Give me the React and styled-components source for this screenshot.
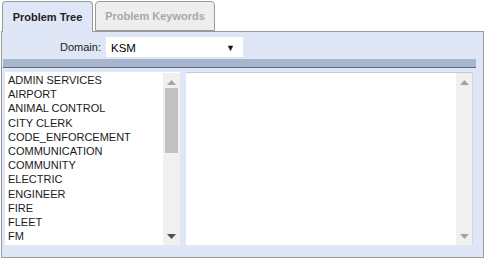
import React from "react";
import styled, { createGlobalStyle } from "styled-components";

const Global = createGlobalStyle`
  html, body { margin: 0; padding: 0; background: #fff; }
  body { font-family: "Liberation Sans", Arial, sans-serif; }
`;

const Root = styled.div`
  width: 483px;
  height: 258px;
  margin-left: 1px;
  display: flex;
  flex-direction: column;
`;

const TabBar = styled.div`
  display: flex;
  gap: 2px;
  padding-left: 1px;
  padding-top: 1px;
  height: 30px;
  position: relative;
  z-index: 1;
`;

const Tab = styled.div`
  box-sizing: border-box;
  width: ${(p) => p.$w}px;
  height: ${(p) => (p.$active ? 31 : 30)}px;
  border: 1px solid #9a9a9a;
  border-bottom: ${(p) => (p.$active ? "none" : "1px solid #9a9a9a")};
  border-radius: 4px 4px 0 0;
  background: ${(p) => (p.$active ? "#dfe6f5" : "#eeeeee")};
  color: ${(p) => (p.$active ? "#222" : "#a8a8a8")};
  font-size: 11px;
  font-weight: bold;
  display: flex;
  align-items: center;
  justify-content: center;
  padding-bottom: 1px;
`;

const Panel = styled.div`
  box-sizing: border-box;
  height: 227px;
  border: 1px solid #9a9a9a;
  background: #dfe6f5;
  display: flex;
  flex-direction: column;
`;

const DomainRow = styled.div`
  display: flex;
  align-items: center;
  gap: 5px;
  padding: 5px 0 0 58px;
  height: 20px;
`;

const Label = styled.span`
  font-size: 11px;
  color: #222;
`;

const Select = styled.div`
  box-sizing: border-box;
  width: 137px;
  height: 20px;
  background: #fff;
  display: flex;
  align-items: center;
  justify-content: space-between;
  padding: 1px 8px 0 5px;
  font-size: 11.5px;
  color: #000;
`;

const Caret = styled.span`
  font-size: 9px;
  color: #111;
`;

const Bar = styled.div`
  box-sizing: border-box;
  height: 9px;
  margin: 2px 7px 0 1px;
  background: #a7b6cb;
  border-bottom: 1px solid #5d6b80;
`;

const Lists = styled.div`
  display: flex;
  gap: 6px;
  padding: 4px 10px 0 3px;
  height: 173px;
`;

const ListBox = styled.div`
  box-sizing: border-box;
  width: ${(p) => p.$w}px;
  height: 173px;
  background: #fff;
  border-top: 1px solid ${(p) => (p.$bordered ? "#c9c9c9" : "#fff")};
  display: flex;
  overflow: hidden;
`;

const Items = styled.div`
  flex: 1;
  padding: 0 0 0 3px;
  overflow: hidden;
`;

const Item = styled.div`
  font-size: 11px;
  line-height: 14.2px;
  color: #1a1a1a;
  white-space: nowrap;
`;

const Scroll = styled.div`
  width: 17px;
  background: #f0f0f0;
  display: flex;
  flex-direction: column;
  align-items: center;
  padding: 7px 0 6px;
  box-sizing: border-box;
  border-right: ${(p) => (p.$edge ? "1px solid #d8d8d8" : "none")};
`;

const Thumb = styled.div`
  width: 13px;
  height: 65px;
  background: #c1c1c1;
  margin-top: 3px;
`;

const Spacer = styled.div`
  flex: 1;
`;

const Arrow = ({ up, color }) => (
  <svg width="9" height="5" viewBox="0 0 9 5">
    <polygon points={up ? "4.5,0 9,5 0,5" : "0,0 9,0 4.5,5"} fill={color} />
  </svg>
);

const depts = [
  "ADMIN SERVICES",
  "AIRPORT",
  "ANIMAL CONTROL",
  "CITY CLERK",
  "CODE_ENFORCEMENT",
  "COMMUNICATION",
  "COMMUNITY",
  "ELECTRIC",
  "ENGINEER",
  "FIRE",
  "FLEET",
  "FM",
  "FORESTRY",
];

export default function App() {
  return (
    <>
      <Global />
      <Root>
        <TabBar>
          <Tab $active $w={91}>Problem Tree</Tab>
          <Tab $w={120}>Problem Keywords</Tab>
        </TabBar>
        <Panel>
          <DomainRow>
            <Label>Domain:</Label>
            <Select>
              <span>KSM</span>
              <Caret>▼</Caret>
            </Select>
          </DomainRow>
          <Bar />
          <Lists>
            <ListBox $w={175}>
              <Items>
                {depts.map((d) => (
                  <Item key={d}>{d}</Item>
                ))}
              </Items>
              <Scroll>
                <Arrow up color="#a3a3a3" />
                <Thumb />
                <Spacer />
                <Arrow color="#505050" />
              </Scroll>
            </ListBox>
            <ListBox $w={288} $bordered>
              <Items />
              <Scroll $edge>
                <Arrow up color="#a3a3a3" />
                <Spacer />
                <Arrow color="#a3a3a3" />
              </Scroll>
            </ListBox>
          </Lists>
        </Panel>
      </Root>
    </>
  );
}
